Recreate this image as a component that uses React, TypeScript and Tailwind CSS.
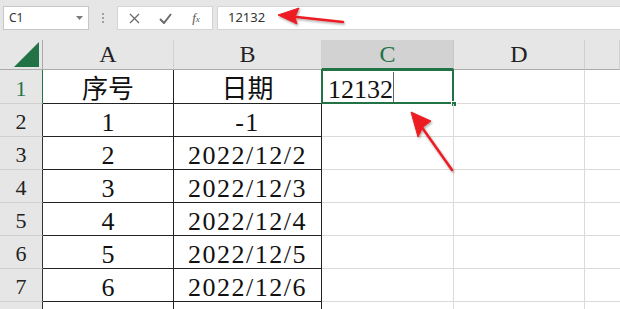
import React from 'react'

// Excel 风格的表格截图：名称框 + 编辑栏 + 单元格区域
const COLS = ['A', 'B', 'C', 'D', '']
const ROWS: [string, string][] = [
  ['序号', '日期'],
  ['1', '-1'],
  ['2', '2022/12/2'],
  ['3', '2022/12/3'],
  ['4', '2022/12/4'],
  ['5', '2022/12/5'],
  ['6', '2022/12/6'],
  ['7', '2022/12/7'],
]

const cellFont = { fontFamily: "'Liberation Serif', 'Noto Sans CJK SC', serif" }
const uiFont = { fontFamily: "'Noto Sans', 'Liberation Sans', sans-serif" }

function Arrows() {
  return (
    <svg className="absolute left-0 top-0 pointer-events-none" width="620" height="309" viewBox="0 0 620 309">
      <defs>
        <filter id="sh" x="-20%" y="-20%" width="140%" height="140%">
          <feDropShadow dx="1" dy="1.5" stdDeviation="1.2" floodColor="#000" floodOpacity="0.35" />
        </filter>
      </defs>
      <g filter="url(#sh)" fill="#ec1c24" stroke="#ec1c24">
        <line x1="343" y1="22" x2="292" y2="16.5" strokeWidth="2.5" strokeLinecap="round" />
        <polygon points="278,15 299,8 295,17 297,24" strokeWidth="1" strokeLinejoin="round" />
        <line x1="452" y1="170" x2="421" y2="126" strokeWidth="2.5" strokeLinecap="round" />
        <polygon points="411,112 431,121 423,127 418,137" strokeWidth="1" strokeLinejoin="round" />
      </g>
    </svg>
  )
}

function FormulaBar() {
  return (
    <div className="h-[40px] bg-[#e6e6e6] flex items-start pt-[6px] pl-[3px]" style={uiFont}>
      <div className="w-[86px] h-[24px] bg-white border border-[#c6c6c6] flex items-center justify-between px-[5px]">
        <span className="text-[12px] text-[#333]">C1</span>
        <svg width="7" height="4" viewBox="0 0 7 4">
          <path d="M0 0h7L3.5 4z" fill="#7a7a7a" />
        </svg>
      </div>
      <div className="w-[28px] h-[24px] flex flex-col items-center justify-center gap-[2px]">
        <span className="w-[2px] h-[2px] bg-[#a0a0a0]" />
        <span className="w-[2px] h-[2px] bg-[#a0a0a0]" />
        <span className="w-[2px] h-[2px] bg-[#a0a0a0]" />
      </div>
      <div className="w-[96px] h-[24px] bg-white border border-[#d4d4d4] flex items-center">
        <div className="w-[32px] flex justify-center">
          <svg width="11" height="11" viewBox="0 0 11 11">
            <path d="M1 1l9 9M10 1l-9 9" stroke="#6b6b6b" strokeWidth="1.3" />
          </svg>
        </div>
        <div className="w-[30px] flex justify-center">
          <svg width="13" height="11" viewBox="0 0 13 11">
            <path d="M1 6l4 4 7-9" stroke="#6b6b6b" strokeWidth="2" fill="none" />
          </svg>
        </div>
        <div className="flex-1 flex justify-center">
          <span className="text-[13px] italic text-[#555]" style={{ fontFamily: "'Liberation Serif', serif" }}>
            f<span className="text-[9px]">x</span>
          </span>
        </div>
      </div>
      <div className="ml-[4px] flex-1 h-[24px] bg-white border border-[#d4d4d4] border-r-0 flex items-center pl-[10px]">
        <span className="text-[13px] text-[#333]">12132</span>
      </div>
    </div>
  )
}

export default function App() {
  return (
    <div className="relative w-[620px] h-[309px] overflow-hidden bg-white">
      <FormulaBar />
      <div
        className="grid grid-cols-[43px_131px_148px_132px_131px_1fr] grid-rows-[30px_34px_33px_33px_33px_33px_33px_33px_33px]"
        style={cellFont}
      >
        {/* 左上角 */}
        <div className="bg-[#e6e6e6] border-r border-b border-[#ababab] flex items-end justify-end pr-[3px] pb-[2px]">
          <svg width="25" height="25" viewBox="0 0 25 25">
            <path d="M25 0V25H0z" fill="#217346" />
          </svg>
        </div>
        {COLS.map((c) =>
          c === 'C' ? (
            <div
              key={c}
              className="bg-[#d2d2d2] border-r border-[#c8c8c8] border-b-2 border-b-[#217346] flex items-end justify-center text-[24px] leading-none text-[#217346] pb-[2px]"
            >
              {c}
            </div>
          ) : (
            <div
              key={c || 'E'}
              className="bg-[#e6e6e6] border-r border-r-[#d0d0d0] border-b border-b-[#ababab] flex items-end justify-center text-[24px] leading-none text-[#222] pb-[3px]"
            >
              {c}
            </div>
          )
        )}

        {ROWS.map(([a, b], i) => (
          <React.Fragment key={i}>
            <div
              className={
                'bg-[#e6e6e6] border-b border-b-[#d0d0d0] border-r flex items-end justify-center text-[22px] leading-none pb-[3px] ' +
                (i === 0 ? 'border-r-[#217346] text-[#217346]' : 'border-r-[#333] text-[#222]')
              }
            >
              {i + 1}
            </div>
            <div className="border-r border-b border-[#222] flex items-end justify-center text-[26px] leading-none text-[#111]">
              {a}
            </div>
            <div
              className={
                'border-r border-b border-[#222] flex items-end justify-center text-[26px] leading-none text-[#111] ' +
                (i === 0 ? '' : 'tracking-[1.5px]')
              }
            >
              {b}
            </div>
            <div className="relative border-r border-b border-[#dadada] flex items-end text-[26px] leading-none text-[#111] pl-[6px]">
              {i === 0 && (
                <>
                  <span>12132</span>
                  <span className="absolute left-[71px] top-[2px] bottom-[1px] w-px bg-[#666]" />
                  <span className="absolute -left-[1px] -top-[1px] -right-[1px] -bottom-[1px] border-2 border-[#217346]" />
                  <span className="absolute -right-[4px] -bottom-[4px] w-[6px] h-[6px] bg-[#217346] border border-white" />
                </>
              )}
            </div>
            <div className="border-r border-b border-[#dadada]" />
            <div className="border-b border-[#dadada]" />
          </React.Fragment>
        ))}
      </div>
      <Arrows />
    </div>
  )
}
